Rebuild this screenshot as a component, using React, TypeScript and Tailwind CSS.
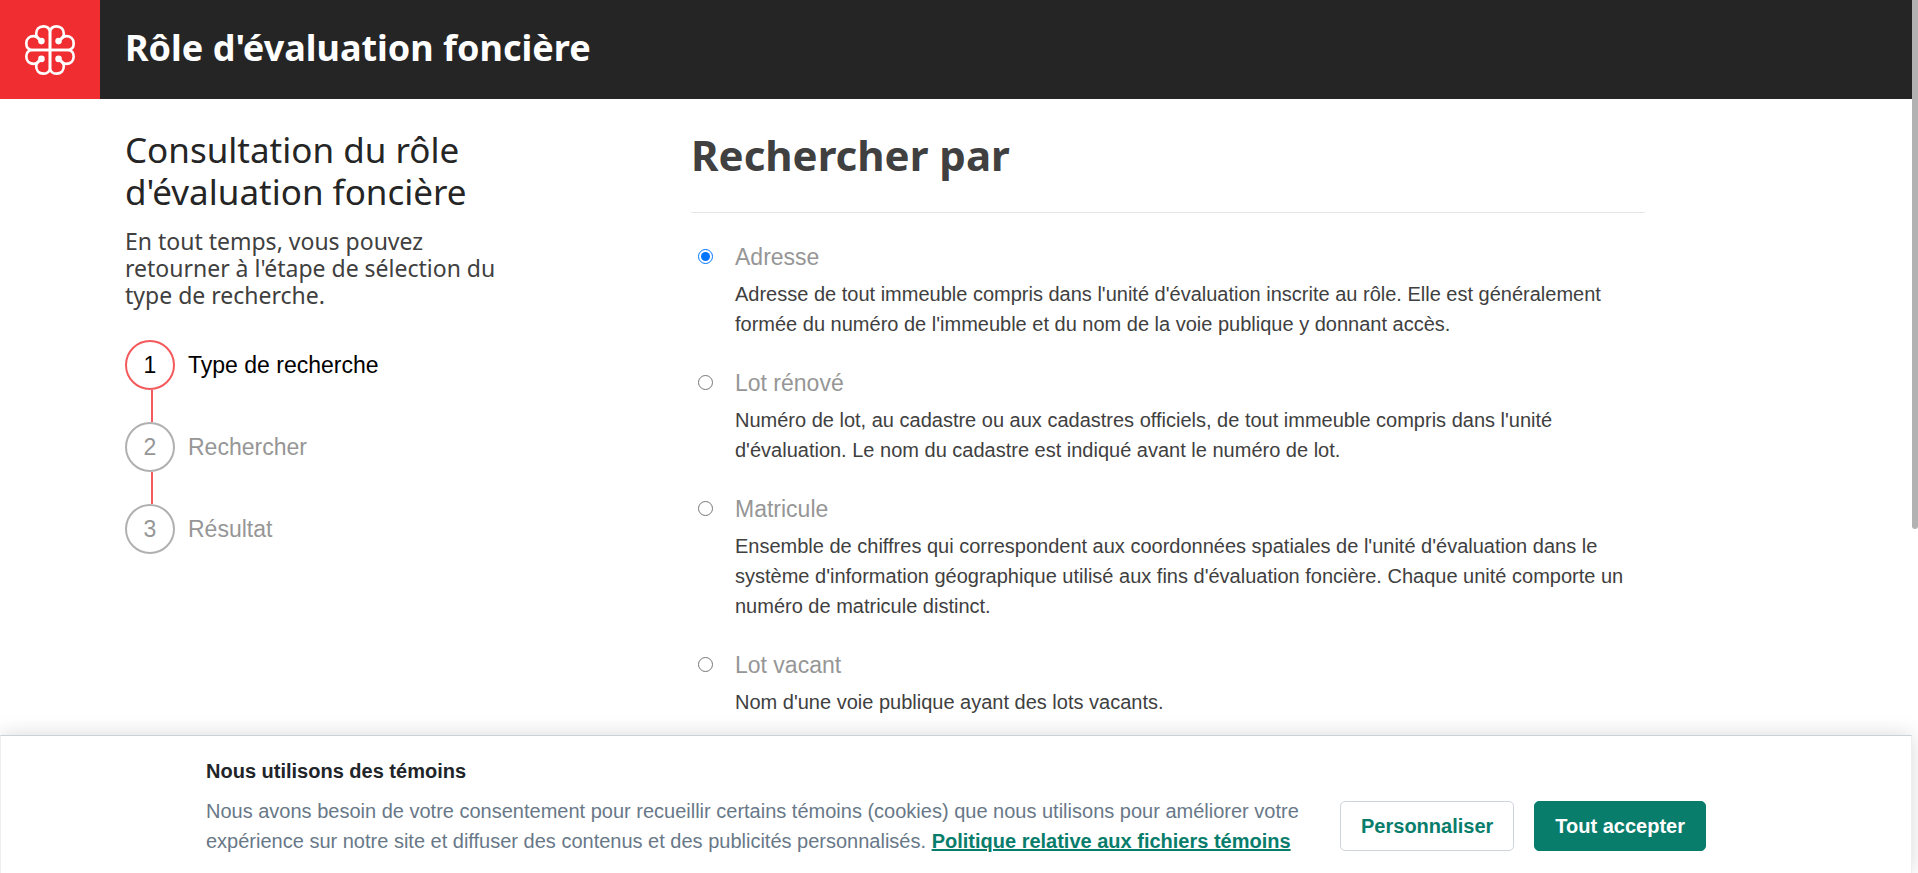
import { useState } from "react";

const SEARCH_TYPES = [
  {
    id: "adresse",
    label: "Adresse",
    description:
      "Adresse de tout immeuble compris dans l'unité d'évaluation inscrite au rôle. Elle est généralement formée du numéro de l'immeuble et du nom de la voie publique y donnant accès.",
  },
  {
    id: "lot-renove",
    label: "Lot rénové",
    description:
      "Numéro de lot, au cadastre ou aux cadastres officiels, de tout immeuble compris dans l'unité d'évaluation. Le nom du cadastre est indiqué avant le numéro de lot.",
  },
  {
    id: "matricule",
    label: "Matricule",
    description:
      "Ensemble de chiffres qui correspondent aux coordonnées spatiales de l'unité d'évaluation dans le système d'information géographique utilisé aux fins d'évaluation foncière. Chaque unité comporte un numéro de matricule distinct.",
  },
  {
    id: "lot-vacant",
    label: "Lot vacant",
    description: "Nom d'une voie publique ayant des lots vacants.",
  },
];

const STEPS = ["Type de recherche", "Rechercher", "Résultat"];

// One quarter of the rosette: two lobes meeting on a round dot.
function Petals() {
  return (
    <>
      <path d="M0 0V-54C-1 -66 -9 -72 -20 -72C-34 -72 -42 -62 -42 -49C-42 -39 -35 -34 -26 -27" />
      <path d="M0 0H-54C-66 -1 -72 -9 -72 -20C-72 -34 -62 -42 -49 -42C-39 -42 -35 -35 -26 -27" />
      <circle cx="-26" cy="-27" r="6" fill="white" />
    </>
  );
}

function Logo() {
  return (
    <svg
      viewBox="-76 -76 152 152"
      className="size-[50px]"
      fill="none"
      stroke="white"
      strokeWidth="8"
      strokeLinejoin="round"
      aria-hidden="true"
    >
      <Petals />
      <g transform="scale(-1 1)">
        <Petals />
      </g>
      <g transform="scale(1 -1)">
        <Petals />
      </g>
      <g transform="scale(-1 -1)">
        <Petals />
      </g>
    </svg>
  );
}

function Header() {
  return (
    <header className="flex h-[99px] items-center bg-[#252525]">
      <a
        href="#"
        aria-label="Ville de Montréal"
        className="flex h-full w-[100px] items-center justify-center bg-[#f02d30]"
      >
        <Logo />
      </a>
      <h1 className="ml-[25px] pb-1 font-['Noto_Sans','Open_Sans',sans-serif] text-[36px] leading-[44px] font-bold text-white">
        Rôle d'évaluation foncière
      </h1>
    </header>
  );
}

function Steps() {
  return (
    <ol className="mt-[31px]">
      {STEPS.map((step, index) => (
        <li key={step}>
          {index > 0 && <div className="ml-[26px] h-8 w-[2px] bg-[#f4595b]" />}
          <div
            className={
              index === 0
                ? "flex items-center gap-[13px] text-black"
                : "flex items-center gap-[13px] text-[#969696]"
            }
          >
            <span
              className={
                index === 0
                  ? "flex size-[50px] items-center justify-center rounded-full border-2 border-[#f4595b]"
                  : "flex size-[50px] items-center justify-center rounded-full border-2 border-[#b0b0b0]"
              }
            >
              {index + 1}
            </span>
            {step}
          </div>
        </li>
      ))}
    </ol>
  );
}

function CookieBanner() {
  return (
    <section
      aria-label="Témoins"
      className="absolute inset-x-0 bottom-0 mr-[6px] flex h-[138px] justify-center border border-b-0 border-[#eceff1] border-t-[#c9d2da] bg-white shadow-[0_0_20px_rgba(0,0,0,0.15)]"
    >
      <div className="flex w-[1500px] items-start justify-between pt-5">
        <div className="w-[1110px] text-[20px] leading-[30px] text-[#687888]">
          <h2 className="font-bold text-[#212529]">Nous utilisons des témoins</h2>
          <p className="mt-[10px]">
            Nous avons besoin de votre consentement pour recueillir certains témoins (cookies) que
            nous utilisons pour améliorer votre expérience sur notre site et diffuser des contenus
            et des publicités personnalisés.{" "}
            <a href="#" className="font-bold text-[#097d6c] underline">
              Politique relative aux fichiers témoins
            </a>
          </p>
        </div>
        <div className="mt-[45px] flex gap-5 text-[20px] font-bold">
          <button
            type="button"
            className="h-[50px] rounded-[5px] border border-[#ced4da] bg-white px-5 text-[#097d6c]"
          >
            Personnaliser
          </button>
          <button
            type="button"
            className="h-[50px] rounded-[5px] border border-[#097d6c] bg-[#097d6c] px-5 text-white"
          >
            Tout accepter
          </button>
        </div>
      </div>
    </section>
  );
}

export default function App() {
  const [selected, setSelected] = useState("adresse");

  return (
    <div className="relative h-screen overflow-hidden bg-white font-['Liberation_Sans',Arial,sans-serif] text-[23px] leading-[30px]">
      <Header />
      <main className="grid grid-cols-[566px_minmax(0,954px)] px-[125px]">
        <aside className="w-[380px] pt-[30px] font-['Noto_Sans','Open_Sans',sans-serif]">
          <h2 className="text-[35px] leading-[42px] text-[#252525]">
            Consultation du rôle d'évaluation foncière
          </h2>
          <p className="mt-[15px] text-[23px] leading-[27px] text-[#404040]">
            En tout temps, vous pouvez retourner à l'étape de sélection du type de recherche.
          </p>
          <div className="font-['Liberation_Sans',Arial,sans-serif]">
            <Steps />
          </div>
        </aside>
        <section>
          <h2 className="border-b border-[#e6e6e6] pt-[29px] pb-[31px] font-['Noto_Sans','Open_Sans',sans-serif] text-[42px] leading-[53px] font-bold text-[#404040]">
            Rechercher par
          </h2>
          <div className="flex flex-col gap-[30px] pt-[30px]">
            {SEARCH_TYPES.map((type) => (
              <div key={type.id} className="flex">
                <input
                  type="radio"
                  name="search-type"
                  id={type.id}
                  checked={selected === type.id}
                  onChange={() => setSelected(type.id)}
                  aria-describedby={type.id + "-description"}
                  className="mx-[7px] mt-[6px] size-[15px] shrink-0"
                />
                <div className="ml-[15px]">
                  <label htmlFor={type.id} className="block leading-7 text-[#969696]">
                    {type.label}
                  </label>
                  <p id={type.id + "-description"} className="mt-2 text-[20px] text-[#404040]">
                    {type.description}
                  </p>
                </div>
              </div>
            ))}
          </div>
        </section>
      </main>
      <div className="absolute top-0 right-0 h-[529px] w-[6px] rounded-b-[3px] bg-[#b2b2b2]" />
      <CookieBanner />
    </div>
  );
}
